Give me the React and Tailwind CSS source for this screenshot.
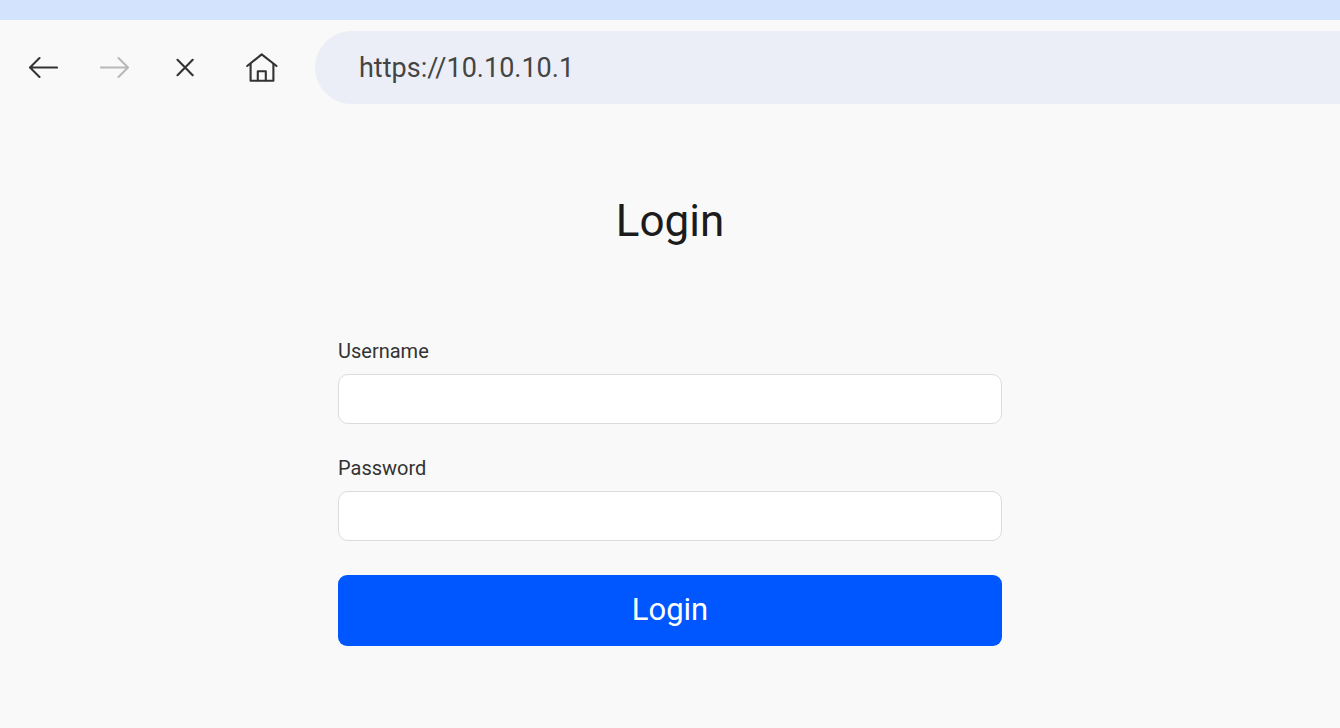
import React, { useState } from 'react';

function BackIcon() {
  return (
    <svg width="30" height="23" viewBox="0 0 30 23" fill="none" stroke="currentColor" strokeWidth="2.1" strokeLinecap="round" strokeLinejoin="round">
      <path d="M29 11.5H2M11.5 2L2 11.5L11.5 21" />
    </svg>
  );
}

function ForwardIcon() {
  return (
    <svg width="30" height="23" viewBox="0 0 30 23" fill="none" stroke="currentColor" strokeWidth="2.1" strokeLinecap="round" strokeLinejoin="round">
      <path d="M2 11.5H29M19.5 2L29 11.5L19.5 21" />
    </svg>
  );
}

function StopIcon() {
  return (
    <svg width="18" height="19" viewBox="0 0 18 19" fill="none" stroke="currentColor" strokeWidth="2.1" strokeLinecap="round">
      <path d="M1.5 1.8L16.7 17.2M16.7 1.8L1.5 17.2" />
    </svg>
  );
}

function HomeIcon() {
  return (
    <svg width="32" height="31" viewBox="0 0 32 31" fill="none" stroke="currentColor" strokeWidth="2.1" strokeLinecap="round" strokeLinejoin="round">
      <path d="M1.2 14L15.7 2.4L30.5 14" />
      <path d="M4.6 12V28.7H27.4V12" />
      <path d="M11.8 28.5V19.2H19.8V28.5" />
    </svg>
  );
}

function NavButton({ label, disabled, children }) {
  return (
    <button
      type="button"
      aria-label={label}
      disabled={disabled}
      className="flex h-[73px] w-[70px] shrink-0 items-center justify-center text-[#333333] disabled:text-[#b8b8b8]"
    >
      {children}
    </button>
  );
}

function BrowserToolbar() {
  const [url, setUrl] = useState('https://10.10.10.1');

  return (
    <header>
      <div className="h-5 bg-[#d3e3fd]" />
      <div className="flex items-center pt-[11px] pl-2">
        <nav aria-label="Browser controls" className="flex shrink-0 gap-px">
          <NavButton label="Back"><BackIcon /></NavButton>
          <NavButton label="Forward" disabled><ForwardIcon /></NavButton>
          <NavButton label="Stop"><StopIcon /></NavButton>
        </nav>
        <div className="flex shrink-0 pr-[18px] pl-[7px]">
          <NavButton label="Home"><HomeIcon /></NavButton>
        </div>
        <input
          type="text"
          aria-label="Address"
          value={url}
          onChange={(e) => setUrl(e.target.value)}
          className="h-[73px] min-w-0 flex-1 rounded-l-full bg-[#ebeef7] pl-11 text-[27px] text-[#444444] outline-none"
        />
      </div>
    </header>
  );
}

function Field({ id, label, type = 'text' }) {
  return (
    <div>
      <label htmlFor={id} className="mb-[11px] block text-[20px] leading-6 text-[#333333]">{label}</label>
      <input
        id={id}
        name={id}
        type={type}
        className="block h-[50px] w-full rounded-[10px] border border-[#dcdcdc] bg-white px-4 text-[20px] outline-none"
      />
    </div>
  );
}

export default function App() {
  return (
    <div className="min-h-screen bg-[#f9f9f9] font-['Roboto',sans-serif]">
      <BrowserToolbar />

      <main className="mx-auto w-full max-w-[664px] pt-[90px] pb-20">
        <h1 className="text-center text-[44px] leading-[54px] text-[#1c1c1c]">Login</h1>
        <form className="mt-[91px]" onSubmit={(e) => e.preventDefault()}>
          <div className="flex flex-col gap-8">
            <Field id="username" label="Username" />
            <Field id="password" label="Password" type="password" />
          </div>
          <button type="submit" className="mt-[34px] h-[71px] w-full rounded-[9px] bg-[#0057ff] text-[31px] text-white">
            Login
          </button>
        </form>
      </main>
    </div>
  );
}
